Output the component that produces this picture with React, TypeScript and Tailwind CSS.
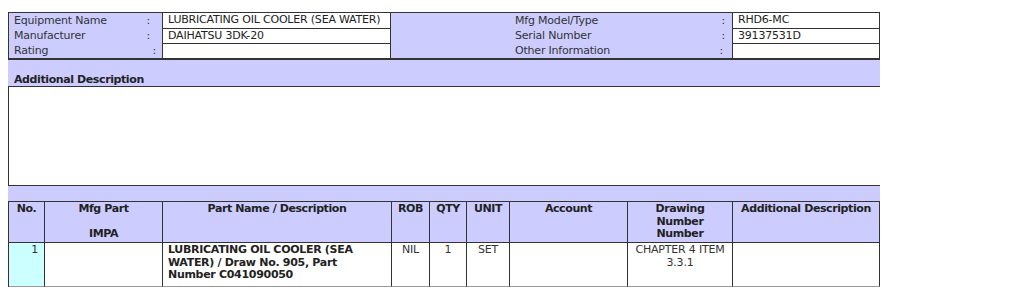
import { type FC, type ReactNode } from "react";

const lavender = "bg-[#ccccff]";

const InfoLabel: FC<{ label: string; pad: string; className?: string }> = ({ label, pad, className = "" }) => (
  <div className={`flex items-center justify-between text-[#333] ${pad} ${className}`}>
    <span>{label}</span>
    <span>:</span>
  </div>
);

const InfoValue: FC<{ children?: ReactNode; className?: string }> = ({ children, className = "" }) => (
  <div className={`flex items-center bg-white pl-[5px] text-[#222] ${className}`}>{children}</div>
);

const EquipmentInfo = () => (
  <div className={`grid w-[872px] grid-cols-[153px_229px_341px_147px] grid-rows-[16px_15px_14px] border-x border-t border-b-2 border-[#333] ${lavender}`}>
    <InfoLabel label="Equipment Name" pad="pl-[5px] pr-[12px]" />
    <InfoValue className="border-x border-b border-[#333]">LUBRICATING OIL COOLER (SEA WATER)</InfoValue>
    <InfoLabel label="Mfg Model/Type" pad="pl-[124px] pr-[7px]" />
    <InfoValue className="border-l border-b border-[#333]">RHD6-MC</InfoValue>

    <InfoLabel label="Manufacturer" pad="pl-[5px] pr-[12px]" />
    <InfoValue className="border-x border-b border-[#333]">DAIHATSU 3DK-20</InfoValue>
    <InfoLabel label="Serial Number" pad="pl-[124px] pr-[7px]" />
    <InfoValue className="border-l border-b border-[#333]">39137531D</InfoValue>

    <InfoLabel label="Rating" pad="pl-[5px] pr-[6px]" />
    <InfoValue className="border-x border-[#333]" />
    <InfoLabel label="Other Information" pad="pl-[124px] pr-[9px]" />
    <InfoValue className="border-l border-[#333]" />
  </div>
);

const columns = [
  { head: "No." },
  { head: <>Mfg Part<br /><br />IMPA</> },
  { head: "Part Name / Description" },
  { head: "ROB" },
  { head: "QTY" },
  { head: "UNIT" },
  { head: "Account" },
  { head: <>Drawing<br />Number<br />Number</> },
  { head: "Additional Description" },
];

const cell = "border-r border-b border-r-[#333] border-b-[#999] bg-white";

const PartsTable = () => (
  <div className="grid w-[872px] grid-cols-[36px_118px_229px_38px_37px_43px_118px_105px_147px] grid-rows-[41px_44px] border-l border-t border-[#333]">
    {columns.map((c, i) => (
      <div
        key={i}
        className={`border-r border-b border-[#333] ${lavender} pt-[1px] text-center font-bold tracking-[-0.4px] text-[#222]`}
      >
        {c.head}
      </div>
    ))}

    <div className={`${cell} !bg-[#ccffff] pr-[6px] pt-[1px] text-right text-[#333]`}>1</div>
    <div className={cell} />
    <div className={`${cell} pl-[5px] pr-[24px] pt-[1px] font-bold tracking-[-0.3px] text-[#222]`}>
      LUBRICATING OIL COOLER (SEA WATER) / Draw No. 905, Part Number C041090050
    </div>
    <div className={`${cell} pt-[1px] text-center text-[#333]`}>NIL</div>
    <div className={`${cell} pt-[1px] text-center text-[#333]`}>1</div>
    <div className={`${cell} pt-[1px] text-center text-[#333]`}>SET</div>
    <div className={cell} />
    <div className={`${cell} px-[4px] pt-[1px] text-center text-[#333]`}>CHAPTER 4 ITEM 3.3.1</div>
    <div className={cell} />
  </div>
);

export default function App() {
  return (
    <div className="min-h-[295px] bg-white pl-[8px] pt-[12px] font-['DejaVu_Sans',sans-serif] text-[11px] leading-[12.5px] tracking-[-0.2px]">
      <EquipmentInfo />
      <div className={`flex h-[27px] w-[872px] items-end border-b border-[#333] pl-[6px] font-bold tracking-[-0.4px] text-[#222] ${lavender}`}>
        Additional Description
      </div>
      <div className="h-[99px] w-[872px] border-l border-b border-[#333] bg-white" />
      <div className={`h-[15px] w-[872px] ${lavender}`} />
      <PartsTable />
    </div>
  );
}
